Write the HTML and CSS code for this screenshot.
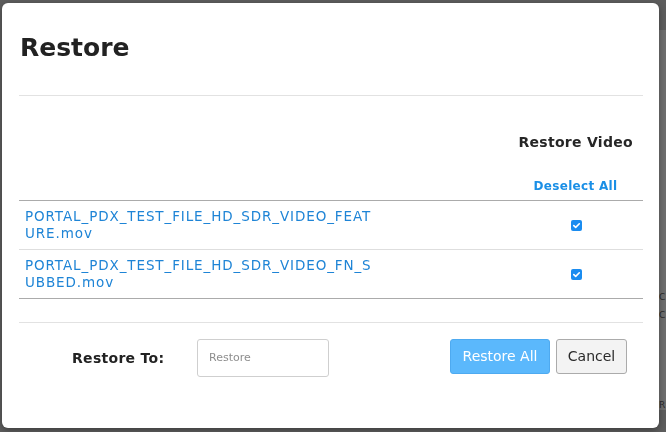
FILE: index.html
```html
<!DOCTYPE html>
<html lang="en">
<head>
<meta charset="utf-8">
<title>Restore</title>
<link rel="stylesheet" href="styles.css">
</head>
<body>
<div class="backdrop">
  <div class="side-panel">
    <span class="ghost g1">C</span>
    <span class="ghost g2">C</span>
    <span class="ghost g3">R</span>
  </div>
</div>

<div class="modal" role="dialog" aria-labelledby="restore-title">
  <h1 id="restore-title" class="modal-title">Restore</h1>
  <hr class="rule">

  <table class="files">
    <thead>
      <tr class="head-title">
        <th class="col-name"></th>
        <th class="col-check">Restore Video</th>
      </tr>
      <tr class="head-action">
        <th class="col-name"></th>
        <th class="col-check"><a class="link-action" href="#">Deselect All</a></th>
      </tr>
    </thead>
    <tbody>
      <tr>
        <td class="col-name"><span class="file-name">PORTAL_PDX_TEST_FILE_HD_SDR_VIDEO_FEATURE.mov</span></td>
        <td class="col-check">
          <svg class="check" viewBox="0 0 11 11" width="11" height="11" aria-hidden="true"><rect x="0" y="0" width="11" height="11" rx="2" fill="#1a8cf0"/><path d="M2.8 5.6 L4.7 7.4 L8.3 3.8" fill="none" stroke="#fff" stroke-width="1.6" stroke-linecap="round" stroke-linejoin="round"/></svg>
        </td>
      </tr>
      <tr>
        <td class="col-name"><span class="file-name">PORTAL_PDX_TEST_FILE_HD_SDR_VIDEO_FN_SUBBED.mov</span></td>
        <td class="col-check">
          <svg class="check" viewBox="0 0 11 11" width="11" height="11" aria-hidden="true"><rect x="0" y="0" width="11" height="11" rx="2" fill="#1a8cf0"/><path d="M2.8 5.6 L4.7 7.4 L8.3 3.8" fill="none" stroke="#fff" stroke-width="1.6" stroke-linecap="round" stroke-linejoin="round"/></svg>
        </td>
      </tr>
    </tbody>
  </table>

  <hr class="rule rule-footer">

  <div class="footer">
    <label class="dest-label" for="dest">Restore To:</label>
    <input id="dest" class="dest-input" type="text" placeholder="Restore">
    <div class="actions">
      <button class="btn btn-primary" type="button">Restore All</button>
      <button class="btn btn-default" type="button">Cancel</button>
    </div>
  </div>
</div>
</body>
</html>
```

FILE: styles.css
```css
* { box-sizing: border-box; }

html, body {
  margin: 0;
  height: 100%;
}

body {
  font-family: "DejaVu Sans", "Liberation Sans", sans-serif;
  color: #222;
  background: #5b5b5b;
  overflow: hidden;
}

/* dimmed page behind the dialog */
.backdrop {
  position: fixed;
  inset: 0;
  background: #5d5d5d;
}

.side-panel {
  position: absolute;
  top: 30px;
  right: 0;
  width: 7px;
  height: 380px;
  background: #6e6e6e;
}

.ghost {
  position: absolute;
  left: 0;
  font-size: 9px;
  line-height: 10px;
  color: #2a2a2a;
}
.g1 { top: 262px; }
.g2 { top: 280px; }
.g3 { top: 370px; }

/* dialog */
.modal {
  position: absolute;
  left: 2px;
  top: 3px;
  width: 657px;
  height: 425px;
  background: #fff;
  border-radius: 6px;
  box-shadow: 0 2px 6px rgba(0, 0, 0, 0.35);
  padding: 28px 16px 0 17px;
  display: flex;
  flex-direction: column;
}

.modal-title {
  margin: 0 0 0 1px;
  font-size: 25px;
  line-height: 34px;
  font-weight: 700;
  color: #222;
}

.rule {
  margin: 0;
  border: 0;
  border-top: 1px solid #e2e2e2;
}
.modal-title + .rule { margin-top: 30px; }

/* file table */
.files {
  width: 100%;
  border-collapse: collapse;
}

.col-check {
  width: 135px;
  text-align: center;
}

.head-title th {
  height: 68px;
  padding: 23px 10px 0 0;
  font-size: 14px;
  font-weight: 700;
  color: #262626;
  text-align: right;
  letter-spacing: 0.3px;
}

.head-action th {
  height: 36px;
  padding: 5px 0 0 0;
  vertical-align: middle;
}

.link-action {
  color: #1a8fe6;
  font-size: 12px;
  font-weight: 700;
  text-decoration: none;
  letter-spacing: 0.3px;
}

.files thead tr:last-child th { border-bottom: 1px solid #ababab; }

.files tbody td {
  border-bottom: 1px solid #dedede;
  vertical-align: middle;
}
.files tbody tr:last-child td { border-bottom: 1px solid #ababab; }

.files tbody .col-name {
  padding: 7px 0 7px 6px;
  height: 49px;
}

.file-name {
  display: block;
  width: 354px;
  word-break: break-all;
  font-size: 13.5px;
  line-height: 17px;
  letter-spacing: 0.9px;
  color: #1e84d6;
}

.check {
  display: block;
  margin: 0 auto;
  position: relative;
  left: 1px;
  top: 1px;
}

.rule-footer { margin-top: 23px; }

/* footer */
.footer {
  display: flex;
  align-items: flex-start;
  padding-top: 16px;
}

.dest-label {
  margin: 10px 0 0 53px;
  width: 125px;
  font-size: 14px;
  line-height: 18px;
  font-weight: 700;
  color: #222;
  letter-spacing: 0.3px;
}

.dest-input {
  width: 132px;
  height: 38px;
  border: 1px solid #cfcfcf;
  border-radius: 3px;
  padding: 0 11px;
  font-family: inherit;
  font-size: 11px;
  color: #333;
  outline: none;
}
.dest-input::placeholder { color: #8e8e8e; }

.actions {
  margin-left: auto;
  margin-right: 16px;
  display: flex;
  gap: 6px;
}

.btn {
  height: 35px;
  font-family: inherit;
  font-size: 14px;
  border-radius: 3px;
  padding: 0 8px;
  cursor: pointer;
}

.btn-primary {
  width: 100px;
  background: #5bb8fc;
  border: 1px solid #4eaaf0;
  color: #fff;
}

.btn-default {
  width: 71px;
  background: #f3f3f3;
  border: 1px solid #ababab;
  color: #2a2a2a;
}
```
